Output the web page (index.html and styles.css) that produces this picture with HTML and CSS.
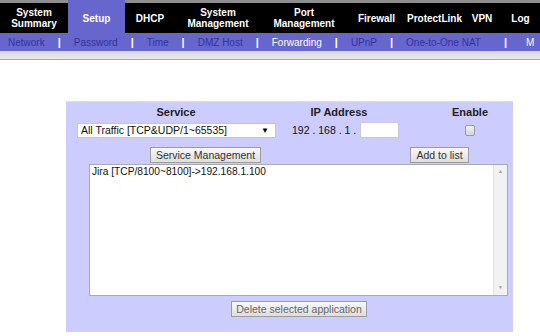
FILE: index.html
```html
<!DOCTYPE html>
<html lang="en">
<head>
    <meta charset="UTF-8">
    <title>Setup - Forwarding</title>
    <link rel="stylesheet" href="styles.css">
</head>
<body>

    <!-- Main tabs -->
    <div class="tabs">
        <div class="tab w1">System<br>Summary</div>
        <div class="tab w2 active">Setup</div>
        <div class="tab w3">DHCP</div>
        <div class="tab w4">System<br>Management</div>
        <div class="tab w5">Port<br>Management</div>
        <div class="tab w6">Firewall</div>
        <div class="tab w7">ProtectLink</div>
        <div class="tab w8">VPN</div>
        <div class="tab w9">Log</div>
    </div>

    <!-- Sub menu for Setup -->
    <div class="subnav">
        <span class="sub">Network</span><span class="sep">|</span>
        <span class="sub">Password</span><span class="sep">|</span>
        <span class="sub">Time</span><span class="sep">|</span>
        <span class="sub">DMZ Host</span><span class="sep">|</span>
        <span class="sub current">Forwarding</span><span class="sep">|</span>
        <span class="sub">UPnP</span><span class="sep">|</span>
        <span class="sub">One-to-One NAT</span><span class="sep last">|</span>
        <span class="sub current more">M</span>
    </div>
    <div class="band"></div>

    <!-- Forwarding panel -->
    <div class="content">
        <div class="panel">
            <div class="row heads">
                <div class="head">Service</div>
                <div class="head">IP Address</div>
                <div></div>
                <div class="head">Enable</div>
            </div>

            <div class="row inputs">
                <div class="select">
                    <span>All Traffic [TCP&amp;UDP/1~65535]</span>
                    <span class="arrow">&#9660;</span>
                </div>
                <div class="ip">
                    <span>192 . 168 . 1 .</span>
                    <input type="text" class="ip-last">
                </div>
                <div class="enable"><span class="check"></span></div>
            </div>

            <div class="row actions">
                <button class="btn btn-service">Service Management</button>
                <button class="btn btn-add">Add to list</button>
            </div>

            <div class="listbox">
                <div class="list-items">
                    <div class="list-item">Jira [TCP/8100~8100]-&gt;192.168.1.100</div>
                </div>
                <div class="scrollbar">
                    <span class="scroll-arrow">&#9650;</span>
                    <span class="scroll-arrow">&#9660;</span>
                </div>
            </div>

            <button class="btn btn-delete">Delete selected application</button>
        </div>
    </div>

</body>
</html>
```

FILE: styles.css
```css
body {
    margin: 0;
    font-family: "Liberation Sans", Arial, sans-serif;
    background: #fff;
    overflow: hidden;
}

/* top tabs */
.tabs {
    display: flex;
    height: 33px;
    white-space: nowrap;
}
.tab {
    flex: none;
    display: flex;
    align-items: center;
    justify-content: center;
    text-align: center;
    padding-top: 3px;
    box-sizing: border-box;
    background: linear-gradient(#8e8e8e 0, #8e8e8e 3px, #000 3px);
    color: #fff;
    font-size: 10px;
    font-weight: bold;
    line-height: 11px;
}
.tab.active {
    background: #6666cc;
}
.w1 { width: 68px; }
.w2 { width: 57px; }
.w3 { width: 50px; }
.w4 { width: 86px; }
.w5 { width: 86px; }
.w6 { width: 59px; }
.w7 { width: 57px; }
.w8 { width: 38px; }
.w9 { width: 39px; }

/* sub menu */
.subnav {
    display: flex;
    align-items: center;
    height: 18px;
    padding-left: 8px;
    gap: 13px;
    background: #6666cc;
    font-size: 10px;
    white-space: nowrap;
    overflow: hidden;
}
.sub {
    color: #34349e;
}
.sub.current {
    color: #fff;
}
.sep {
    color: #fff;
    font-weight: bold;
    font-size: 11px;
}
.sep.last {
    margin-left: 10px;
}
.sub.more {
    margin-left: 6px;
}
.band {
    height: 8px;
    background: linear-gradient(#d8d8d8, #ececec);
    border-bottom: 1px solid #a8a8a8;
}

/* panel */
.content {
    padding: 41px 0 0 66px;
}
.panel {
    width: 447px;
    height: 231px;
    box-sizing: border-box;
    padding-top: 3px;
    background: #ccccff;
    border-top: 1px solid #dcdcf4;
    font-size: 10.5px;
    color: #111;
}
.row {
    display: grid;
    grid-template-columns: 220px 106px 35px 86px;
    align-items: center;
}
.heads {
    height: 14px;
}
.head {
    text-align: center;
    font-weight: bold;
    font-size: 11px;
    color: #222;
}
.inputs {
    height: 16px;
    margin-top: 3px;
}
.select {
    display: flex;
    justify-content: space-between;
    align-items: center;
    width: 199px;
    height: 15px;
    margin-left: 11px;
    padding: 0 6px 0 3px;
    box-sizing: border-box;
    background: #fff;
    border: 1px solid #c4c4d8;
}
.arrow {
    font-size: 8px;
    color: #000;
}
.ip {
    grid-column: 2 / 4;
    display: flex;
    align-items: center;
    gap: 4px;
    padding-left: 6px;
}
.ip-last {
    width: 39px;
    height: 16px;
    box-sizing: border-box;
    margin: 0;
    border: 1px solid #c8c8dc;
    background: #fff;
}
.enable {
    display: flex;
    justify-content: center;
}
.check {
    width: 10px;
    height: 11px;
    box-sizing: border-box;
    border: 1px solid #9a9aa6;
    border-radius: 2px;
    background: linear-gradient(#f4f4f4, #d4d4da);
}
.actions {
    height: 16px;
    margin-top: 9px;
}
.btn {
    height: 16px;
    padding: 0;
    box-sizing: border-box;
    border: 1px solid #9c9c9c;
    background: linear-gradient(#f8f8f8, #dedede);
    color: #333;
    font-family: "Liberation Sans", Arial, sans-serif;
    font-size: 10.5px;
    line-height: 14px;
}
.btn-service {
    width: 111px;
    margin-left: 84px;
}
.btn-add {
    grid-column: 3 / 5;
    width: 59px;
    margin-left: 18px;
}

/* list */
.listbox {
    display: flex;
    width: 419px;
    height: 132px;
    margin: 1px 0 0 23px;
    box-sizing: border-box;
    background: #fff;
    border: 1px solid #a9a9b8;
}
.list-items {
    flex: 1;
    padding: 1px 0 0 2px;
}
.list-item {
    font-size: 10.2px;
    color: #111;
}
.scrollbar {
    width: 13px;
    display: flex;
    flex-direction: column;
    justify-content: space-between;
    align-items: center;
    padding: 3px 0 5px;
    background: #f2f2f2;
    border-left: 1px solid #e2e2e2;
}
.scroll-arrow {
    font-size: 5px;
    color: #a0a0a0;
}
.btn-delete {
    display: block;
    width: 136px;
    margin: 5px 0 0 165px;
    color: #666;
}
```
